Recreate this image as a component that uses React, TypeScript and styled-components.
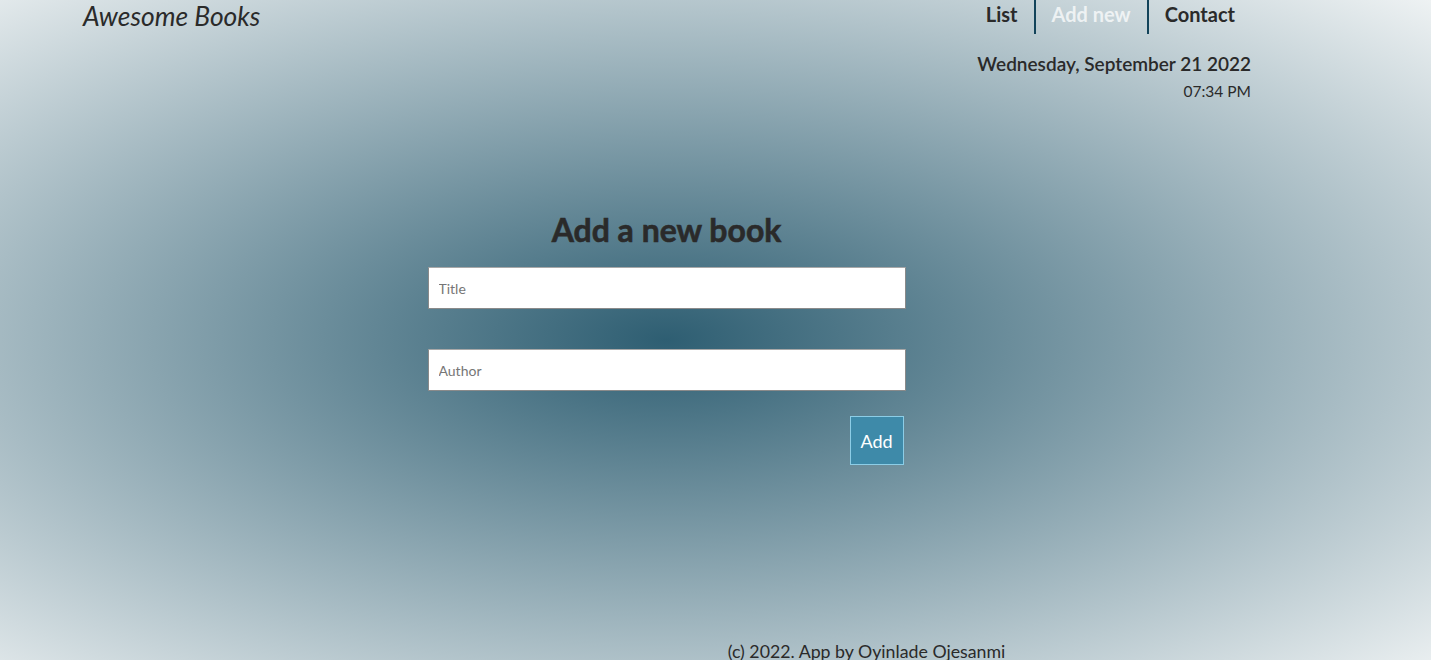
import React from "react";
import styled, { createGlobalStyle } from "styled-components";

const GlobalStyle = createGlobalStyle`
  html, body { margin: 0; padding: 0; }
  body {
    font-family: Lato, "Open Sans", sans-serif;
    color: #2a2a2a;
  }
`;

const Page = styled.div`
  min-height: 660px;
  overflow: hidden;
  background: radial-gradient(ellipse farthest-corner at 666px 340px, #2e5e72 0%, #eef2f3 100%);
  display: flex;
  flex-direction: column;
`;

const Header = styled.header`
  display: flex;
  justify-content: space-between;
  align-items: flex-start;
  padding: 0 180px 0 83px;
`;

const Logo = styled.h1`
  margin: 1px 0 0;
  font-size: 26.4px;
  font-style: italic;
  font-weight: 400;
  line-height: 1.2;
  color: #2a2a2a;
`;

const RightBlock = styled.div`
  display: flex;
  flex-direction: column;
  align-items: flex-end;
`;

const Nav = styled.ul`
  display: flex;
  list-style: none;
  margin: 0;
  padding: 0;
`;

const NavItem = styled.li<{ $active?: boolean; $divider?: boolean }>`
  height: 34px;
  box-sizing: border-box;
  padding: 2px 16px 0;
  font-size: 20px;
  font-weight: 700;
  line-height: 24px;
  color: ${(p) => (p.$active ? "rgba(255,255,255,0.72)" : "#2a2a2a")};
  border-left: ${(p) => (p.$divider ? "2px solid #12435a" : "none")};
`;

const DateText = styled.p`
  margin: 17px 0 0;
  font-size: 19px;
  font-weight: 600;
  line-height: 25px;
  color: #2a2a2a;
`;

const TimeText = styled.p`
  margin: 6px 0 0;
  font-size: 15.5px;
  font-weight: 400;
  line-height: 19px;
  color: #2a2a2a;
`;

const Main = styled.main`
  display: flex;
  flex-direction: column;
  align-items: center;
  padding: 110px 98px 0 0;
`;

const Title = styled.h2`
  margin: 0;
  font-size: 32px;
  font-weight: 700;
  line-height: 38px;
  color: #2a2a2a;
  -webkit-text-stroke: 0.6px #2a2a2a;
`;

const Form = styled.form`
  width: 478px;
  margin-top: 18px;
  display: flex;
  flex-direction: column;
  align-items: flex-end;
`;

const Input = styled.input`
  width: 100%;
  height: 42px;
  box-sizing: border-box;
  border: 1px solid #8a8a8a;
  border-top-color: #a8a8a8;
  background: #fff;
  padding: 0 10px;
  font-family: Lato, sans-serif;
  font-size: 14px;
  color: #333;
  outline: none;
  & + & { margin-top: 40px; }
  &::placeholder { color: #767676; }
`;

const AddButton = styled.button`
  margin: 25px 2px 0 0;
  width: 54px;
  height: 49px;
  box-sizing: border-box;
  background: #3e8aa9;
  border: 1px solid #8ccde6;
  color: #fff;
  font-family: Lato, sans-serif;
  font-size: 18px;
  padding: 0;
  cursor: pointer;
`;

const Footer = styled.footer`
  margin-top: 176px;
  display: flex;
  justify-content: center;
  padding-left: 302px;
  font-size: 17.75px;
  line-height: 21px;
  color: #2a2a2a;
`;

export default function App() {
  return (
    <>
      <GlobalStyle />
      <Page>
        <Header>
          <Logo>Awesome Books</Logo>
          <RightBlock>
            <Nav>
              <NavItem>List</NavItem>
              <NavItem $active $divider>Add new</NavItem>
              <NavItem $divider>Contact</NavItem>
            </Nav>
            <DateText>Wednesday, September 21 2022</DateText>
            <TimeText>07:34 PM</TimeText>
          </RightBlock>
        </Header>
        <Main>
          <Title>Add a new book</Title>
          <Form onSubmit={(e) => e.preventDefault()}>
            <Input type="text" placeholder="Title" />
            <Input type="text" placeholder="Author" />
            <AddButton type="submit">Add</AddButton>
          </Form>
        </Main>
        <Footer>(c) 2022. App by Oyinlade Ojesanmi</Footer>
      </Page>
    </>
  );
}
